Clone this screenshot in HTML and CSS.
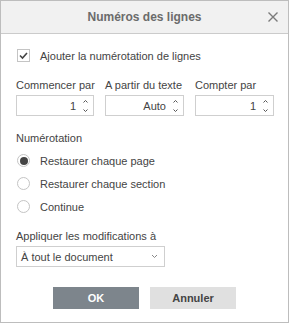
FILE: index.html
```html
<!DOCTYPE html>
<html lang="fr">
<head>
<meta charset="utf-8">
<title>Numéros des lignes</title>
<link rel="stylesheet" href="styles.css">
</head>
<body>
<div class="dialog">
  <div class="header">
    <span class="title">Numéros des lignes</span>
    <svg class="close" width="10" height="10" viewBox="0 0 10 10"><path d="M0.5 0.5 L9.5 9.5 M9.5 0.5 L0.5 9.5" stroke="#7a7a7a" stroke-width="1.4" fill="none"/></svg>
  </div>
  <div class="body">
    <div class="check-row">
      <span class="checkbox"><svg width="11" height="11" viewBox="0 0 11 11"><path d="M2 5.5 L4.5 8 L9 3" stroke="#444" stroke-width="1.6" fill="none"/></svg></span>
      <span class="label">Ajouter la numérotation de lignes</span>
    </div>
    <div class="fields">
      <div class="field">
        <div class="flabel">Commencer par</div>
        <div class="spin"><span class="val">1</span><span class="arrows"><svg width="7" height="16" viewBox="0 0 7 16"><path d="M1.5 4.5 L3.5 2.5 L5.5 4.5 M1.5 11.5 L3.5 13.5 L5.5 11.5" stroke="#555" stroke-width="1" fill="none"/></svg></span></div>
      </div>
      <div class="field">
        <div class="flabel">A partir du texte</div>
        <div class="spin"><span class="val">Auto</span><span class="arrows"><svg width="7" height="16" viewBox="0 0 7 16"><path d="M1.5 4.5 L3.5 2.5 L5.5 4.5 M1.5 11.5 L3.5 13.5 L5.5 11.5" stroke="#555" stroke-width="1" fill="none"/></svg></span></div>
      </div>
      <div class="field">
        <div class="flabel">Compter par</div>
        <div class="spin"><span class="val">1</span><span class="arrows"><svg width="7" height="16" viewBox="0 0 7 16"><path d="M1.5 4.5 L3.5 2.5 L5.5 4.5 M1.5 11.5 L3.5 13.5 L5.5 11.5" stroke="#555" stroke-width="1" fill="none"/></svg></span></div>
      </div>
    </div>
    <div class="section-label">Numérotation</div>
    <div class="radios">
      <div class="radio-row"><span class="radio checked"><span class="dot"></span></span><span class="label">Restaurer chaque page</span></div>
      <div class="radio-row"><span class="radio"></span><span class="label">Restaurer chaque section</span></div>
      <div class="radio-row"><span class="radio"></span><span class="label">Continue</span></div>
    </div>
    <div class="section-label apply">Appliquer les modifications à</div>
    <div class="select">
      <span>À tout le document</span>
      <svg width="7" height="5" viewBox="0 0 7 5"><path d="M1 1 L3.5 3.5 L6 1" stroke="#888" stroke-width="1" fill="none"/></svg>
    </div>
  </div>
  <div class="footer">
    <button class="btn primary">OK</button>
    <button class="btn">Annuler</button>
  </div>
</div>
</body>
</html>
```
FILE: styles.css
```css
html, body {
  margin: 0;
  padding: 0;
  background: #fff;
}
body {
  font-family: "Liberation Sans", Arial, sans-serif;
  font-size: 11px;
  color: #444;
}
.dialog {
  width: 289px;
  height: 323px;
  box-sizing: border-box;
  border: 1px solid #bdbdbd;
  display: flex;
  flex-direction: column;
  background: #fff;
}
.header {
  height: 32px;
  border-bottom: 1px solid #cbcbcb;
  background: #f1f1f1;
  display: flex;
  align-items: center;
  justify-content: center;
  position: relative;
}
.title {
  font-weight: bold;
  font-size: 12px;
  color: #6b6b6b;
}
.close {
  position: absolute;
  right: 10px;
  top: 11px;
}
.body {
  padding: 15px 15px 0 15px;
  display: flex;
  flex-direction: column;
}
.check-row {
  display: flex;
  align-items: center;
  height: 13px;
}
.checkbox {
  width: 11px;
  height: 11px;
  border: 1px solid #c4c4c4;
  display: flex;
  align-items: center;
  justify-content: center;
  margin-left: 1px;
  margin-right: 10px;
  background: #fff;
}
.fields {
  display: grid;
  grid-template-columns: 78px 79px 79px;
  column-gap: 11px;
  margin-top: 17px;
}
.flabel {
  line-height: 13px;
  height: 13px;
  margin-bottom: 3px;
  white-space: nowrap;
}
.spin {
  height: 19px;
  border: 1px solid #cfcfcf;
  display: flex;
  align-items: center;
  justify-content: flex-end;
  padding-right: 4px;
}
.val {
  font-size: 11px;
  margin-right: 6px;
}
.arrows {
  display: flex;
}
.section-label {
  line-height: 13px;
  margin-top: 16px;
}
.radios {
  display: flex;
  flex-direction: column;
  gap: 10px;
  margin-top: 9px;
}
.radio-row {
  display: flex;
  align-items: center;
  height: 13px;
}
.radio {
  width: 11px;
  height: 11px;
  border: 1px solid #c4c4c4;
  border-radius: 50%;
  margin-left: 1px;
  margin-right: 10px;
  display: flex;
  align-items: center;
  justify-content: center;
}
.dot {
  width: 8px;
  height: 8px;
  border-radius: 50%;
  background: #444;
}
.section-label.apply {
  margin-top: 17px;
}
.select {
  margin-top: 3px;
  height: 19px;
  border: 1px solid #cfcfcf;
  display: flex;
  align-items: center;
  justify-content: space-between;
  padding: 0 6px 0 4px;
  width: 137px;
}
.footer {
  display: flex;
  justify-content: center;
  gap: 11px;
  margin-top: 20px;
}
.btn {
  width: 86px;
  height: 22px;
  border: none;
  background: #e0e0e0;
  color: #444;
  font-family: "Liberation Sans", Arial, sans-serif;
  font-size: 11px;
  font-weight: bold;
  padding: 0;
}
.btn.primary {
  background: #7d858c;
  color: #fff;
}
```
